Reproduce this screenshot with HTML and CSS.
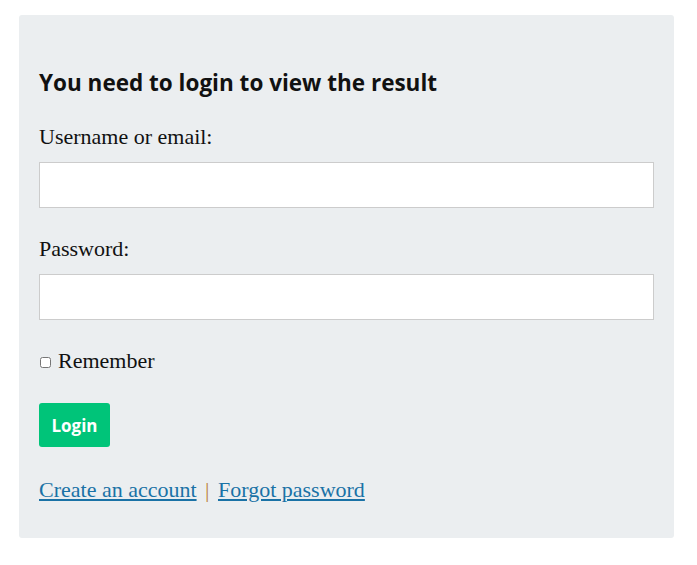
FILE: index.html
```html
<!DOCTYPE html>
<html lang="en">
<head>
    <meta charset="UTF-8">
    <meta name="viewport" content="width=device-width, initial-scale=1.0">
    <title>Login</title>
    <link rel="stylesheet" href="styles.css">
</head>
<body>
    <div class="login-box">
        <h1 class="title">You need to login to view the result</h1>
        <form id="loginForm">
            <label for="username">Username or email:</label>
            <input type="text" id="username" name="username" class="field">
            <label for="password">Password:</label>
            <input type="password" id="password" name="password" class="field">
            <div class="remember">
                <input type="checkbox" id="remember" name="remember">
                <span>Remember</span>
            </div>
            <button type="submit" class="button">Login</button>
        </form>
        <div class="links">
            <a href="#">Create an account</a>
            <span class="sep">|</span>
            <a href="#">Forgot password</a>
        </div>
    </div>
</body>
</html>
```

FILE: styles.css
```css
body {
    margin: 0;
    background-color: white;
    font-family: "Liberation Serif", serif;
    color: #111;
}
.login-box {
    width: 655px;
    box-sizing: border-box;
    margin: 15px 0 0 19px;
    padding: 53px 20px 33px;
    background-color: #ebeef0;
    border-radius: 3px;
}
.title {
    margin: 0 0 24px;
    font-family: "Open Sans", sans-serif;
    font-size: 22.5px;
    font-weight: bold;
    line-height: 30px;
    color: #111;
}
label {
    display: block;
    font-size: 22px;
    line-height: 30px;
    margin-bottom: 10px;
}
.field {
    display: block;
    width: 100%;
    height: 46px;
    box-sizing: border-box;
    margin: 0 0 26px;
    border: 1px solid #cccccc;
    background-color: white;
}
.remember {
    display: flex;
    align-items: center;
    font-size: 22px;
    line-height: 30px;
    margin-bottom: 27px;
}
.remember input {
    width: 11px;
    height: 11px;
    margin: 2px 7px 0 1px;
}
.button {
    display: block;
    width: 71px;
    height: 44px;
    margin: 0 0 28px;
    padding: 0;
    border: none;
    border-radius: 3px;
    background-color: #00c479;
    color: white;
    font-family: "Open Sans", sans-serif;
    font-size: 17px;
    font-weight: bold;
    cursor: pointer;
}
.links {
    font-size: 22px;
    line-height: 30px;
}
.links a {
    color: #1a72a6;
    text-decoration: underline;
}
.sep {
    color: #b9823a;
    margin: 0 3px;
}
```
